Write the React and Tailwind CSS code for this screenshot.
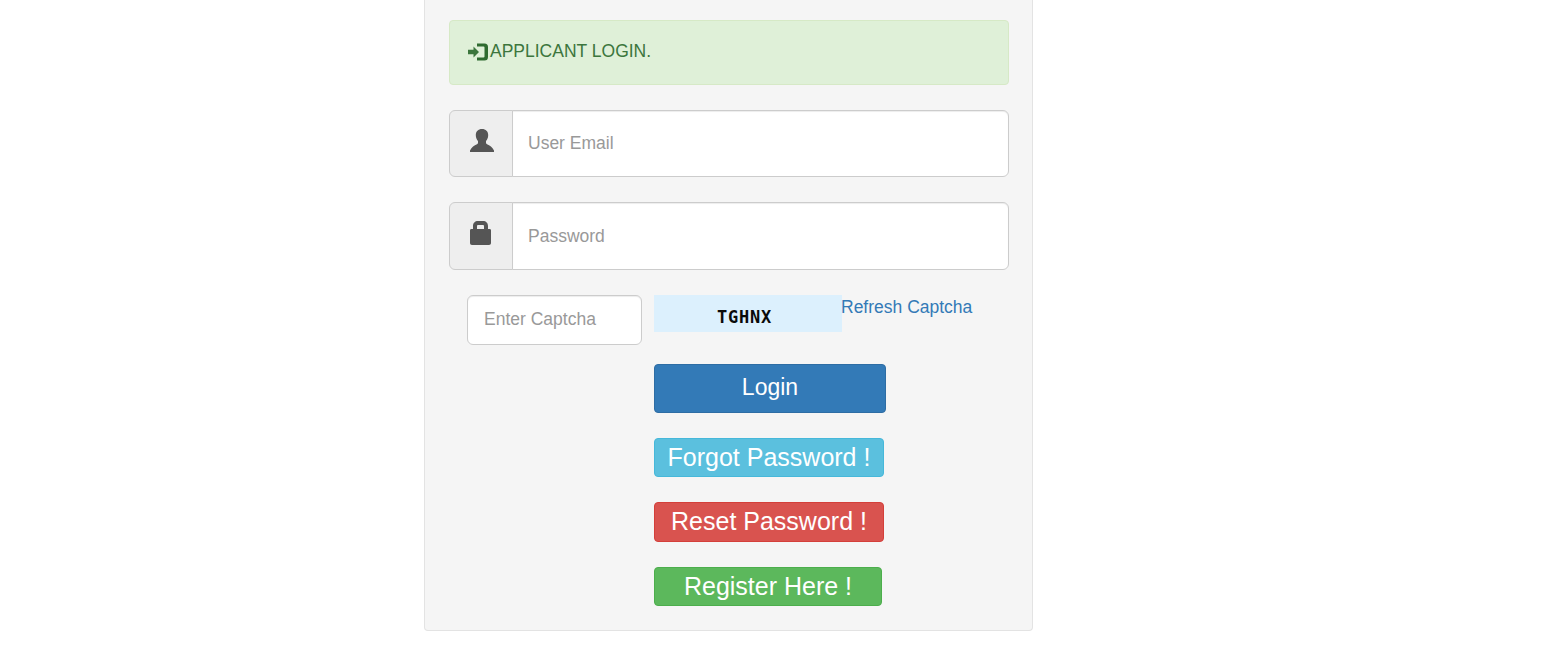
function LogInIcon() {
  return (
    <svg width="22" height="18" viewBox="0 0 22 18" className="shrink-0">
      <path d="M0 6.800h5.500V3.500L11 9 5.500 14.500v-3.300H0z" fill="#3c763d" />
      <path d="M9 0.500H16.500A3.500 3.500 0 0 1 20 4v10a3.500 3.500 0 0 1-3.500 3.500H9v-3h6.500a1 1 0 0 0 1-1V4.500a1 1 0 0 0-1-1H9z" fill="#2f6b30" />
    </svg>
  );
}

function UserIcon() {
  return (
    <svg width="24" height="23" viewBox="0 0 24 23">
      <path d="M12 0c3.800 0 6.200 2.400 6.200 6 0 2.700-1 4.900-2.200 6.100v2.200l1 .9c2.800 1.200 5.300 2.800 7 6.300V23H0v-1.500c1.700-3.500 4.200-5.100 7-6.300l1-.9v-2.200C6.800 10.900 5.800 8.700 5.800 6 5.800 2.400 8.200 0 12 0z" fill="#555555" />
    </svg>
  );
}

function LockIcon() {
  return (
    <svg width="21" height="24" viewBox="0 0 21 24">
      <path fillRule="evenodd" d="M3 8V5C3 2 5 0 8 0h5c3 0 5 2 5 5v3h1.500C20.500 8 21 8.500 21 9.500V22c0 1.200-.8 2-2 2H2c-1.200 0-2-.8-2-2V9.500C0 8.500.5 8 1.500 8zM7 8h7V5.200C14 4.400 13.600 4 12.800 4H8.200C7.400 4 7 4.400 7 5.200z" fill="#555555" />
    </svg>
  );
}

function InputRow({ icon, placeholder, type, rowClass, iconClass }) {
  return (
    <div className={`flex ${rowClass}`}>
      <span className={`w-[64px] shrink-0 flex justify-center bg-[#eeeeee] border border-[#cccccc] rounded-l-[6px] ${iconClass}`}>
        {icon}
      </span>
      <input
        type={type}
        placeholder={placeholder}
        className="flex-1 min-w-0 -ml-px bg-white border border-[#cccccc] rounded-r-[6px] px-[15px] text-[17.5px] text-[#555555] placeholder:text-[#999999] shadow-[inset_0_1px_1px_rgba(0,0,0,0.075)] outline-none"
      />
    </div>
  );
}

const buttons = [
  { label: 'Forgot Password !', className: 'w-[230px] h-[39px] mt-[25px] bg-[#5bc0de] border-[#46b8da]' },
  { label: 'Reset Password !', className: 'w-[230px] h-[40px] mt-[25px] bg-[#d9534f] border-[#d43f3a]' },
  { label: 'Register Here !', className: 'w-[228px] h-[39px] mt-[25px] bg-[#5cb85c] border-[#4cae4c]' },
];

export default function App() {
  return (
    <div className="min-h-[652px] bg-white font-['Liberation_Sans',Arial,sans-serif]">
      <div className="ml-[424px] w-[609px] h-[631px] bg-[#f5f5f5] border border-t-0 border-[#e3e3e3] rounded-b-[4px] pl-[24px] pr-[23px] pt-[20px]">
        <div className="h-[65px] flex items-center px-[18px] pb-[2px] bg-[#dff0d8] border border-[#d6e9c6] rounded-[4px] text-[#3c763d] text-[17.5px]">
          <LogInIcon />
          <span>APPLICANT LOGIN.</span>
        </div>

        <InputRow
          icon={<UserIcon />}
          placeholder="User Email"
          type="email"
          rowClass="h-[67px] mt-[25px]"
          iconClass="pt-[18px] pl-[1px]"
        />
        <InputRow
          icon={<LockIcon />}
          placeholder="Password"
          type="password"
          rowClass="h-[68px] mt-[25px]"
          iconClass="pt-[18px] pr-[2px]"
        />

        <div className="flex items-start mt-[25px] pl-[18px]">
          <input
            type="text"
            placeholder="Enter Captcha"
            className="w-[175px] h-[50px] bg-white border border-[#cccccc] rounded-[6px] px-4 pb-[2px] text-[17.5px] text-[#555555] placeholder:text-[#999999] shadow-[inset_0_1px_1px_rgba(0,0,0,0.075)] outline-none"
          />
          <div className="w-[188px] h-[37px] ml-[12px] flex items-center justify-center pr-[7px] pt-[9px] bg-[#dcf0fd] font-['DejaVu_Sans_Mono',monospace] font-bold text-[17px] tracking-[0.8px] text-[#0a0a0a]">
            TGHNX
          </div>
          <a href="#" className="-ml-px mt-[1px] text-[17.5px] leading-[22px] text-[#337ab7]">
            Refresh Captcha
          </a>
        </div>

        <div className="flex flex-col items-start pl-[205px] mt-[19px]">
          <button className="w-[232px] h-[49px] pb-[3px] bg-[#337ab7] border border-[#2e6da4] rounded-[4px] text-white text-[23px] leading-none">
            Login
          </button>
          {buttons.map((button) => (
            <button
              key={button.label}
              className={`${button.className} border rounded-[4px] pb-[1px] text-white text-[25px] leading-none`}
            >
              {button.label}
            </button>
          ))}
        </div>
      </div>
    </div>
  );
}
